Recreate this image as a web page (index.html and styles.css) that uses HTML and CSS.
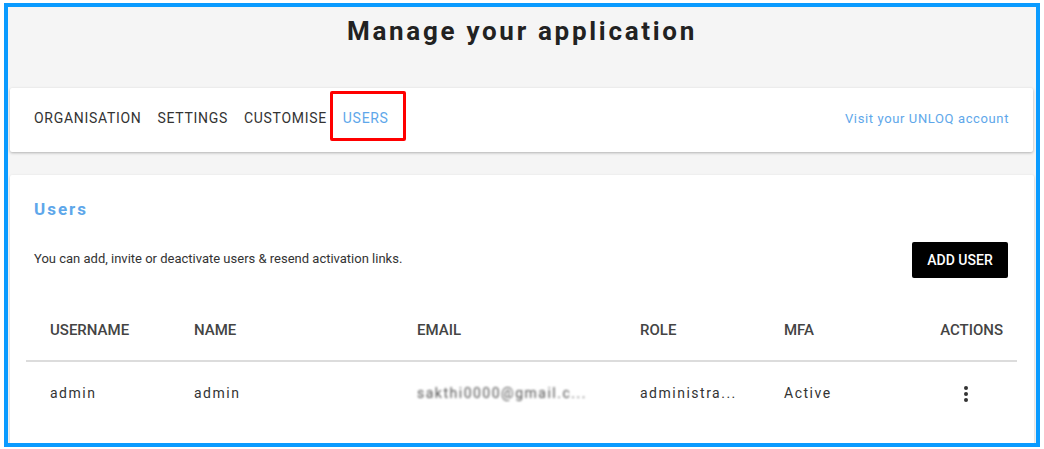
FILE: index.html
```html
<!DOCTYPE html>
<html lang="en">
<head>
<meta charset="utf-8">
<title>Manage your application</title>
<link rel="stylesheet" href="styles.css">
</head>
<body>
<div class="frame">
  <header class="page-head">
    <h1 class="page-title">Manage your application</h1>
  </header>
  <nav class="nav-card">
    <div class="nav-items">
      <a class="nav-item">ORGANISATION</a>
      <a class="nav-item">SETTINGS</a>
      <a class="nav-item">CUSTOMISE</a>
      <a class="nav-item nav-item--active">USERS</a>
    </div>
    <a class="nav-link">Visit your UNLOQ account</a>
  </nav>
  <section class="users-card">
    <h2 class="users-title">Users</h2>
    <div class="users-intro">
      <p class="users-desc">You can add, invite or deactivate users &amp; resend activation links.</p>
      <button class="btn-add">ADD USER</button>
    </div>
    <div class="table">
      <div class="row row--head">
        <div class="cell">USERNAME</div>
        <div class="cell">NAME</div>
        <div class="cell">EMAIL</div>
        <div class="cell">ROLE</div>
        <div class="cell">MFA</div>
        <div class="cell cell--actions">ACTIONS</div>
      </div>
      <div class="row row--body">
        <div class="cell">admin</div>
        <div class="cell">admin</div>
        <div class="cell"><span class="blurred">sakthi0000@gmail.c...</span></div>
        <div class="cell">administra...</div>
        <div class="cell">Active</div>
        <div class="cell cell--actions">
          <span class="kebab"><i></i><i></i><i></i></span>
        </div>
      </div>
    </div>
  </section>
</div>
</body>
</html>
```
FILE: styles.css
```css
* { box-sizing: border-box; }
html, body { margin: 0; padding: 0; background: #fff; }
body { font-family: Roboto, "Noto Sans", Arial, sans-serif; color: #333; }

.frame {
  margin: 3px 4px 2px 4px;
  height: 444px;
  border: 4px solid #0a9bff;
  background: #f5f5f5;
  overflow: hidden;
}

.page-head { padding-top: 7px; height: 81px; }
.page-title {
  margin: 0;
  text-align: center;
  font-size: 26px;
  line-height: 34px;
  font-weight: 700;
  letter-spacing: 2.7px;
  color: #222;
}

.nav-card {
  margin: 0 3px 0 2px;
  height: 64px;
  background: #fff;
  border-radius: 2px;
  box-shadow: 0 1px 3px rgba(0,0,0,0.28);
  display: flex;
  align-items: center;
  justify-content: space-between;
  padding: 0 24px 4px 24px;
}
.nav-items { display: flex; gap: 16px; align-items: center; }
.nav-item {
  font-size: 14px;
  line-height: 20px;
  letter-spacing: 0.7px;
  color: #333;
  position: relative;
}
.nav-item--active { color: #5ea7ea; }
.nav-item--active::after {
  content: "";
  position: absolute;
  left: -13px; right: -17px; top: -17px; bottom: -13px;
  border: 3px solid #f00;
  border-radius: 2px;
}
.nav-link {
  font-size: 13px;
  letter-spacing: 0.62px;
  color: #5ea7ea;
}

.users-card {
  margin: 23px 2px 0 2px;
  background: #fff;
  border-radius: 2px;
  box-shadow: 0 1px 3px rgba(0,0,0,0.18);
  padding: 22px 26px 20px 24px;
  height: 300px;
}
.users-title {
  margin: 0;
  font-size: 17px;
  line-height: 24px;
  font-weight: 700;
  letter-spacing: 2px;
  color: #5ea7ea;
}
.users-intro {
  margin-top: 21px;
  display: flex;
  align-items: center;
  justify-content: space-between;
}
.users-desc { margin: 0; font-size: 13px; color: #333; padding-bottom: 3px; }
.btn-add {
  width: 96px;
  height: 36px;
  border: 0;
  border-radius: 2px;
  background: #000;
  color: #fff;
  font-family: inherit;
  font-size: 14px;
  font-weight: 500;
  padding: 0;
}

.table { margin: 24px -9px 0 -8px; }
.row {
  display: grid;
  grid-template-columns: 144px 223px 223px 144px 144px 1fr;
  align-items: center;
}
.row--head {
  height: 60px;
  border-bottom: 2px solid #dcdcdc;
  font-size: 15px;
  font-weight: 500;
  color: #444;
  padding-bottom: 2px;
}
.row--body {
  height: 62px;
  font-size: 14px;
  letter-spacing: 1.5px;
  color: #333;
}
.cell { padding-left: 24px; white-space: nowrap; }
.cell--actions { text-align: right; padding-right: 14px; padding-left: 0; }
.row--body .cell--actions { padding-right: 49px; display: flex; justify-content: flex-end; }

.blurred { filter: blur(0.8px); color: #555; }

.kebab {
  display: flex;
  flex-direction: column;
  gap: 2px;
  width: 4px;
  margin-top: 1px;
}
.kebab i {
  display: block;
  width: 4px;
  height: 4px;
  border-radius: 50%;
  background: #333;
}
```
